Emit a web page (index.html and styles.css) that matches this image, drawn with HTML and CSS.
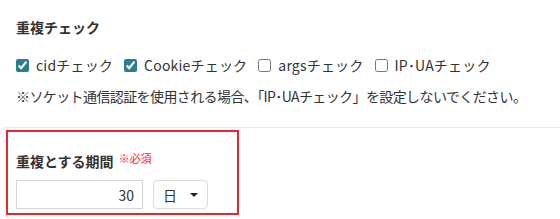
FILE: index.html
```html
<!DOCTYPE html>
<html lang="ja">
<head>
    <meta charset="UTF-8">
    <meta name="viewport" content="width=device-width, initial-scale=1.0">
    <title>重複チェック</title>
    <link rel="stylesheet" href="styles.css">
</head>
<body>
    <div class="section">
        <h2>重複チェック</h2>
        <div class="checks">
            <label><input type="checkbox" checked> cidチェック</label>
            <label><input type="checkbox" checked> Cookieチェック</label>
            <label><input type="checkbox"> argsチェック</label>
            <label><input type="checkbox"> IP･UAチェック</label>
        </div>
        <p class="note">※ソケット通信認証を使用される場合、「IP･UAチェック」を設定しないでください。</p>
    </div>
    <hr class="divider">
    <div class="box">
        <h2>重複とする期間 <span class="required">※必須</span></h2>
        <div class="period">
            <input type="text" class="num" value="30">
            <div class="select">日 <span class="caret"></span></div>
        </div>
    </div>
</body>
</html>
```

FILE: styles.css
```css
body {
    margin: 0;
    font-family: "Noto Sans CJK JP", "Noto Sans", sans-serif;
    font-size: 14px;
    color: #333;
    background-color: #fff;
}
h2 {
    margin: 0;
    font-size: 14px;
    font-weight: bold;
    line-height: 20px;
}
.section {
    padding: 17px 16px 0;
}
.checks {
    display: flex;
    gap: 11px;
    margin-top: 18px;
    line-height: 20px;
}
.checks label {
    display: flex;
    align-items: center;
    letter-spacing: 0.2px;
}
.checks input {
    width: 13px;
    height: 13px;
    margin: 0 7px 0 0;
    accent-color: #2a7f8f;
}
.note {
    margin: 11px 0 0;
    line-height: 20px;
    letter-spacing: -0.6px;
}
.divider {
    border: none;
    border-top: 1px solid #e8e8e8;
    margin: 21px 0 0 5px;
}
.box {
    margin: 2px 0 0 6px;
    width: 213px;
    border: 2px solid #e8262d;
    padding: 16px 8px 4px 8px;
}
.required {
    color: #ff1a1a;
    font-size: 11px;
    font-weight: normal;
    vertical-align: 4px;
    margin-left: 2px;
}
.period {
    display: flex;
    gap: 10px;
    margin-top: 9px;
}
.num {
    width: 127px;
    height: 29px;
    box-sizing: border-box;
    border: 1px solid #d5d5d5;
    padding: 0 8px;
    text-align: right;
    font-family: inherit;
    font-size: 14px;
    color: #333;
}
.select {
    width: 55px;
    height: 29px;
    box-sizing: border-box;
    border: 1px solid #dcdcdc;
    border-radius: 4px;
    display: flex;
    align-items: center;
    justify-content: space-between;
    padding: 0 9px;
}
.caret {
    width: 0;
    height: 0;
    border-left: 4px solid transparent;
    border-right: 4px solid transparent;
    border-top: 4px solid #222;
}
```
